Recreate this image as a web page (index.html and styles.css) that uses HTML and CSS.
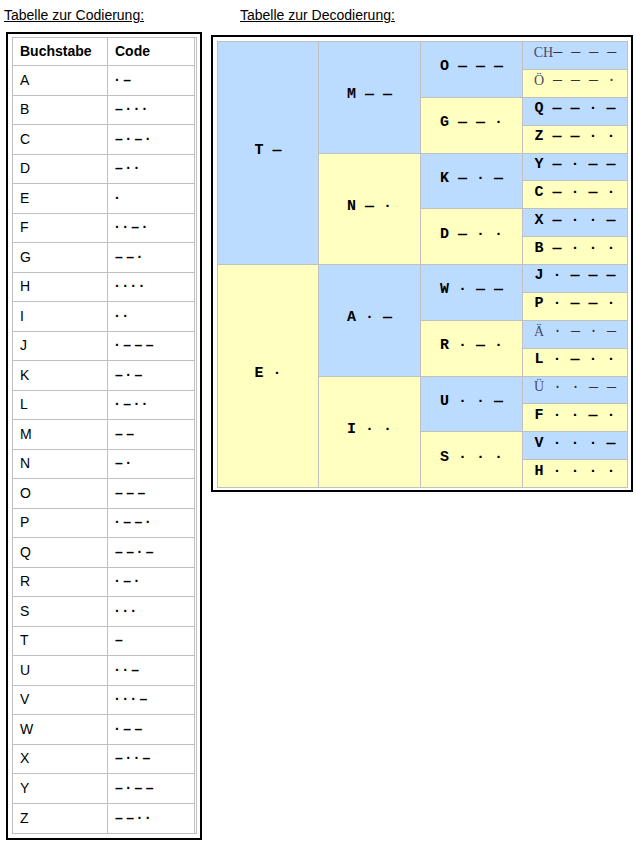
FILE: index.html
```html
<!DOCTYPE html>
<html lang="de">
<head>
<meta charset="utf-8">
<title>Morse</title>
<link rel="stylesheet" href="styles.css">
</head>
<body>
<div class="page">
  <section class="left">
    <h2 class="title">Tabelle zur Codierung:</h2>
    <div class="box code-box">
      <div class="code-table">
        <div class="c h">Buchstabe</div><div class="c h last">Code</div>
        <div class="c">A</div><div class="c m last">·–</div>
        <div class="c">B</div><div class="c m last">–···</div>
        <div class="c">C</div><div class="c m last">–·–·</div>
        <div class="c">D</div><div class="c m last">–··</div>
        <div class="c">E</div><div class="c m last">·</div>
        <div class="c">F</div><div class="c m last">··–·</div>
        <div class="c">G</div><div class="c m last">––·</div>
        <div class="c">H</div><div class="c m last">····</div>
        <div class="c">I</div><div class="c m last">··</div>
        <div class="c">J</div><div class="c m last">·–––</div>
        <div class="c">K</div><div class="c m last">–·–</div>
        <div class="c">L</div><div class="c m last">·–··</div>
        <div class="c">M</div><div class="c m last">––</div>
        <div class="c">N</div><div class="c m last">–·</div>
        <div class="c">O</div><div class="c m last">–––</div>
        <div class="c">P</div><div class="c m last">·––·</div>
        <div class="c">Q</div><div class="c m last">––·–</div>
        <div class="c">R</div><div class="c m last">·–·</div>
        <div class="c">S</div><div class="c m last">···</div>
        <div class="c">T</div><div class="c m last">–</div>
        <div class="c">U</div><div class="c m last">··–</div>
        <div class="c">V</div><div class="c m last">···–</div>
        <div class="c">W</div><div class="c m last">·––</div>
        <div class="c">X</div><div class="c m last">–··–</div>
        <div class="c">Y</div><div class="c m last">–·––</div>
        <div class="c bottom">Z</div><div class="c m last bottom">––··</div>
      </div>
    </div>
  </section>
  <section class="right">
    <h2 class="title title-right">Tabelle zur Decodierung:</h2>
    <div class="box deco-box">
      <div class="deco">
        <div class="d blue span8">T —</div>
        <div class="d blue span4">M — —</div>
        <div class="d blue span2">O — — —</div>
        <div class="d blue alt"><span class="sl">CH</span>— — — —</div>
        <div class="d yellow alt"><span class="sl">Ö</span> — — — ·</div>
        <div class="d yellow span2">G — — ·</div>
        <div class="d blue">Q — — · —</div>
        <div class="d yellow">Z — — · ·</div>
        <div class="d yellow span4">N — ·</div>
        <div class="d blue span2">K — · —</div>
        <div class="d blue">Y — · — —</div>
        <div class="d yellow">C — · — ·</div>
        <div class="d yellow span2">D — · ·</div>
        <div class="d blue">X — · · —</div>
        <div class="d yellow">B — · · ·</div>
        <div class="d yellow span8">E ·</div>
        <div class="d blue span4">A · —</div>
        <div class="d blue span2">W · — —</div>
        <div class="d blue">J · — — —</div>
        <div class="d yellow">P · — — ·</div>
        <div class="d yellow span2">R · — ·</div>
        <div class="d blue alt"><span class="sl">Ä</span> · — · —</div>
        <div class="d yellow">L · — · ·</div>
        <div class="d yellow span4">I · ·</div>
        <div class="d blue span2">U · · —</div>
        <div class="d blue alt"><span class="sl">Ü</span> · · — —</div>
        <div class="d yellow">F · · — ·</div>
        <div class="d yellow span2">S · · ·</div>
        <div class="d blue">V · · · —</div>
        <div class="d yellow">H · · · ·</div>
      </div>
    </div>
  </section>
</div>
</body>
</html>
```
FILE: styles.css
```css
html, body {
  margin: 0;
  padding: 0;
  background: #fff;
}
body {
  font-family: "Liberation Sans", Arial, sans-serif;
  color: #000;
}
.page {
  display: flex;
  align-items: flex-start;
  padding: 7px 0 0 4px;
}
.title {
  margin: 0;
  font-size: 14px;
  font-weight: normal;
  line-height: 16px;
  text-decoration: underline;
}
.left {
  width: 207px;
  display: flex;
  flex-direction: column;
}
.box {
  border: 2px solid #000;
}
.code-box {
  margin: 9px 0 0 2px;
  padding: 3px 3px 4px 4px;
  box-sizing: border-box;
  width: 196px;
}
.code-table {
  display: grid;
  grid-template-columns: 95px 87px;
  grid-template-rows: 28px;
  grid-auto-rows: 29.5px;
  border-left: 1px solid #c0c0c0;
  border-top: 1px solid #c0c0c0;
  border-right: 3px double #c0c0c0;
  border-bottom: 1px solid #c0c0c0;
}
.c {
  border-right: 1px solid #c0c0c0;
  border-bottom: 1px solid #c0c0c0;
  padding-left: 7px;
  padding-bottom: 1px;
  display: flex;
  align-items: center;
  font-size: 14px;
}
.c.last {
  border-right: none;
}
.c.bottom {
  border-bottom: none;
}
.c.h {
  font-weight: bold;
  padding-bottom: 2px;
}
.c.m {
  font-weight: bold;
  letter-spacing: 3.5px;
}
.right {
  display: flex;
  flex-direction: column;
}
.title-right {
  margin-left: 29px;
}
.deco-box {
  margin-top: 12px;
  padding: 4px 3px 2px 4px;
}
.deco {
  display: grid;
  grid-template-columns: 100px 101px 101px 104px;
  grid-template-rows: repeat(16, 26.875px);
  gap: 1px;
  padding: 1px;
  background: #c0c0c0;
}
.d {
  display: flex;
  align-items: center;
  justify-content: center;
  padding-bottom: 5px;
  font-family: "Liberation Mono", "Courier New", monospace;
  font-weight: bold;
  font-size: 15px;
  white-space: pre;
  color: #000;
}
.blue {
  background: #bbdcff;
}
.yellow {
  background: #ffffc0;
}
.span8 {
  grid-row: span 8;
}
.span4 {
  grid-row: span 4;
}
.span2 {
  grid-row: span 2;
}
.d.alt {
  font-weight: normal;
  color: #333;
}
.sl {
  font-family: "Liberation Serif", "Times New Roman", serif;
  font-size: 14px;
  color: #4a4a66;
}
```
